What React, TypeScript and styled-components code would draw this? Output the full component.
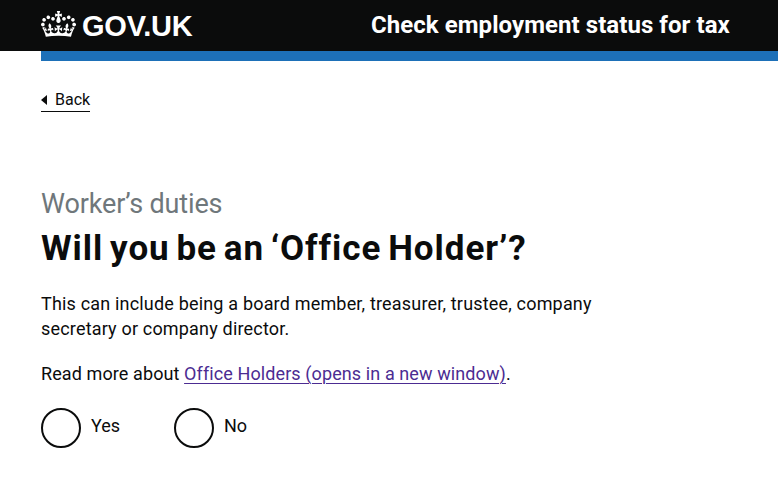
import React from "react";
import styled, { createGlobalStyle } from "styled-components";

const GlobalStyle = createGlobalStyle`
  * { box-sizing: border-box; }
  body {
    margin: 0;
    background: #fff;
    color: #0b0c0c;
    font-family: Roboto, "Noto Sans", Arial, sans-serif;
    font-variant-ligatures: none;
    overflow: hidden;
  }
`;

const Page = styled.div`
  width: 778px;
  height: 492px;
`;

const Header = styled.header`
  height: 51px;
  padding: 0 0 0 41px;
  display: flex;
  background: #0b0c0c;
  color: #fff;
  white-space: nowrap;
`;

const Logo = styled.a`
  width: 330px;
  display: flex;
  align-items: flex-start;
  color: inherit;
  text-decoration: none;
`;

const Crown = styled.svg`
  width: 35px;
  height: 26px;
  margin-top: 11px;
  fill: currentColor;
`;

const LogoText = styled.span`
  margin: 9px 0 0 6px;
  font: bold 29px/34px "Liberation Sans", Arial, sans-serif;
  letter-spacing: -0.2px;
`;

const ServiceName = styled.span`
  margin-top: 9px;
  font-size: 24px;
  line-height: 32px;
  font-weight: 700;
  letter-spacing: 0.06px;
`;

const BlueBar = styled.div`
  height: 10px;
  margin-left: 41px;
  background: #1d70b8;
`;

const Content = styled.main`
  padding-left: 41px;
`;

const BackLink = styled.a`
  display: flex;
  align-items: center;
  width: 49px;
  height: 21px;
  margin-top: 30px;
  padding-bottom: 2px;
  border-bottom: 1px solid #0b0c0c;
  font-size: 16px;
  line-height: 18px;
  white-space: nowrap;
`;

const BackArrow = styled.svg`
  width: 6px;
  height: 10px;
  margin-right: 8px;
  flex: none;
`;

const Caption = styled.div`
  margin-top: 76px;
  color: #6f777b;
  font-size: 27px;
  line-height: 32px;
  letter-spacing: -0.14px;
  white-space: nowrap;
`;

const Heading = styled.h1`
  margin: 8px 0 0;
  font-size: 35px;
  line-height: 42px;
  font-weight: 700;
  letter-spacing: 0.95px;
  word-spacing: -2.8px;
  white-space: nowrap;
`;

const Paragraph = styled.p<{ $top: number; $spacing: number }>`
  margin: ${({ $top }) => $top}px 0 0;
  font-size: 18px;
  line-height: 25px;
  letter-spacing: ${({ $spacing }) => $spacing}px;
  white-space: nowrap;
`;

const VisitedLink = styled.a`
  color: #4c2c92;
  text-decoration: underline;
  text-decoration-thickness: 1px;
  text-underline-offset: 3px;
`;

const Radios = styled.div`
  display: flex;
  margin-top: 22px;
`;

const Radio = styled.label`
  display: flex;
  width: 133px;
  font-size: 18px;
  line-height: 36px;
`;

const RadioCircle = styled.input`
  appearance: none;
  width: 40px;
  height: 40px;
  margin: 0 10px 0 0;
  border: 2px solid #0b0c0c;
  border-radius: 50%;
  background: #fff;
`;

export default function App() {
  return (
    <Page>
      <GlobalStyle />
      <Header>
        <Logo>
          <Crown viewBox="0 0 132 97" preserveAspectRatio="none" aria-hidden="true">
            <path
              fillRule="evenodd"
              d="M25 30.2c3.5 1.5 7.7-.2 9.1-3.7 1.5-3.6-.2-7.8-3.9-9.2-3.6-1.4-7.6.3-9.1 3.9-1.4 3.5.3 7.5 3.9 9zM9 39.5c3.6 1.5 7.8-.2 9.2-3.7 1.5-3.6-.2-7.8-3.9-9.1-3.6-1.5-7.6.2-9.1 3.8-1.4 3.5.3 7.5 3.8 9zM4.4 57.2c3.5 1.5 7.7-.2 9.1-3.8 1.5-3.6-.2-7.7-3.9-9.1-3.5-1.5-7.6.3-9.1 3.8-1.4 3.5.3 7.6 3.9 9.1zm38.3-21.4c3.5 1.5 7.7-.2 9.1-3.8 1.5-3.6-.2-7.7-3.9-9.1-3.6-1.5-7.6.3-9.1 3.8-1.3 3.6.4 7.7 3.9 9.1zm64.4-5.6c-3.6 1.5-7.8-.2-9.1-3.7-1.5-3.6.2-7.8 3.8-9.2 3.6-1.4 7.7.3 9.2 3.9 1.3 3.5-.4 7.5-3.9 9zm15.9 9.3c-3.6 1.5-7.7-.2-9.1-3.7-1.5-3.6.2-7.8 3.7-9.1 3.6-1.5 7.7.2 9.2 3.8 1.5 3.5-.3 7.5-3.8 9zm4.7 17.7c-3.6 1.5-7.8-.2-9.2-3.8-1.5-3.6.2-7.7 3.9-9.1 3.6-1.5 7.7.3 9.2 3.8 1.3 3.5-.4 7.6-3.9 9.1zM89.3 35.8c-3.6 1.5-7.8-.2-9.2-3.8-1.4-3.6.2-7.7 3.9-9.1 3.6-1.5 7.7.3 9.2 3.8 1.4 3.6-.3 7.7-3.9 9.1zM69.7 17.7l8.9 4.7V9.3l-8.9 2.8c-.2-.3-.5-.6-.9-.9L72.4 0H59.6l3.5 11.2c-.3.3-.6.5-.9.9l-8.8-2.8v13.1l8.8-4.7c.3.3.6.7.9.9l-5 15.4v.1c-.2.8-.4 1.6-.4 2.4 0 4.1 3.1 7.5 7 8.1h.2c.3 0 .7.1 1 .1.4 0 .7 0 1-.1h.2c4-.6 7.1-4.1 7.1-8.1 0-.8-.1-1.7-.4-2.4V34l-5.1-15.4c.4-.2.7-.6 1-.9zM66 92.8c16.9 0 32.8 1.1 47.1 3.2 4-16.9 8.9-26.7 14-33.5l-9.6-3.4c1 4.9 1.1 7.2 0 10.2-1.5-1.4-3-4.3-4.2-8.7L108.6 76c2.8-2 5-3.2 7.5-3.3-4.4 9.4-10 11.9-13.6 11.2-4.3-.8-6.3-4.6-5.6-7.9 1-4.7 5.7-5.9 8-.5 4.3-8.7-3-11.4-7.6-8.8 7.1-7.2 7.9-13.5 2.1-21.1-8 6.1-8.1 12.3-4.5 20.8-4.7-5.4-12.1-2.5-9.5 6.2 3.4-5.2 7.9-2 7.2 3.1-.6 4.3-6.4 7.8-13.5 7.2-10.3-.9-10.9-8-11.2-13.8 2.5-.5 7.1 1.8 11 7.3L80.2 60c-4.1 4.4-8 5.3-12.3 5.4 1.4-4.4 8-11.6 8-11.6H55.5s6.4 7.2 7.9 11.6c-4.2-.1-8-1-12.3-5.4l1.4 16.4c3.9-5.5 8.5-7.7 10.9-7.3-.3 5.8-.9 12.8-11.1 13.8-7.2.6-12.9-2.9-13.5-7.2-.7-5 3.8-8.3 7.1-3.1 2.7-8.7-4.6-11.6-9.4-6.2 3.7-8.5 3.6-14.7-4.6-20.8-5.8 7.6-5 13.9 2.2 21.1-4.7-2.6-11.9.1-7.7 8.8 2.3-5.5 7.1-4.2 8.1.5.7 3.3-1.3 7.1-5.7 7.9-3.5.7-9-1.8-13.5-11.2 2.5.1 4.7 1.3 7.5 3.3l-4.7-15.4c-1.2 4.4-2.7 7.2-4.3 8.7-1.1-3-.9-5.3 0-10.2l-9.5 3.4c5 6.9 9.9 16.7 14 33.5 14.8-2.1 30.8-3.2 47.7-3.2z"
            />
          </Crown>
          <LogoText>GOV.UK</LogoText>
        </Logo>
        <ServiceName>Check employment status for tax</ServiceName>
      </Header>
      <BlueBar />
      <Content>
        <BackLink>
          <BackArrow viewBox="0 0 6 10" aria-hidden="true">
            <path d="M0 5L6 0V10Z" fill="#0b0c0c" />
          </BackArrow>
          Back
        </BackLink>
        <Caption>Worker’s duties</Caption>
        <Heading>Will you be an ‘Office Holder’?</Heading>
        <Paragraph $top={21} $spacing={0.18}>
          This can include being a board member, treasurer, trustee, company
          <br />
          secretary or company director.
        </Paragraph>
        <Paragraph $top={20} $spacing={0.1}>
          Read more about <VisitedLink>Office Holders (opens in a new window)</VisitedLink>.
        </Paragraph>
        <Radios>
          <Radio>
            <RadioCircle type="radio" name="office-holder" />
            Yes
          </Radio>
          <Radio>
            <RadioCircle type="radio" name="office-holder" />
            No
          </Radio>
        </Radios>
      </Content>
    </Page>
  );
}
